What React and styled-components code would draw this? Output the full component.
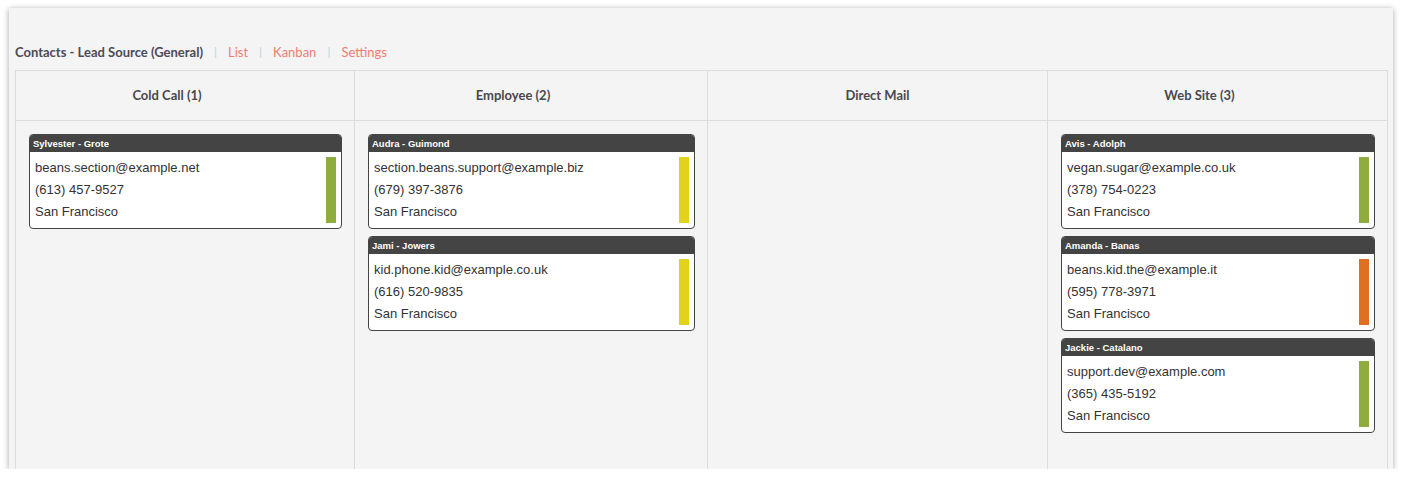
import React from 'react';
import styled, { createGlobalStyle } from 'styled-components';

const GlobalStyle = createGlobalStyle`
  html, body {
    margin: 0;
    padding: 0;
    background: #ffffff;
  }
  body {
    font-family: Lato, "Liberation Sans", sans-serif;
  }
`;

const columns = [
  {
    title: 'Cold Call',
    count: 1,
    width: 339,
    cards: [
      { name: 'Sylvester - Grote', email: 'beans.section@example.net', phone: '(613) 457-9527', city: 'San Francisco', color: '#8fac3e' },
    ],
  },
  {
    title: 'Employee',
    count: 2,
    width: 353,
    cards: [
      { name: 'Audra - Guimond', email: 'section.beans.support@example.biz', phone: '(679) 397-3876', city: 'San Francisco', color: '#e3d21b' },
      { name: 'Jami - Jowers', email: 'kid.phone.kid@example.co.uk', phone: '(616) 520-9835', city: 'San Francisco', color: '#e3d21b' },
    ],
  },
  {
    title: 'Direct Mail',
    count: 0,
    width: 340,
    cards: [],
  },
  {
    title: 'Web Site',
    count: 3,
    width: 339,
    cards: [
      { name: 'Avis - Adolph', email: 'vegan.sugar@example.co.uk', phone: '(378) 754-0223', city: 'San Francisco', color: '#8fac3e' },
      { name: 'Amanda - Banas', email: 'beans.kid.the@example.it', phone: '(595) 778-3971', city: 'San Francisco', color: '#de701f' },
      { name: 'Jackie - Catalano', email: 'support.dev@example.com', phone: '(365) 435-5192', city: 'San Francisco', color: '#8fac3e' },
    ],
  },
];

function App() {
  return (
    <>
      <GlobalStyle />
      <Panel>
        <Toolbar>
          <Title>Contacts - Lead Source (General)</Title>
          <Sep>|</Sep>
          <NavLink href="#">List</NavLink>
          <Sep>|</Sep>
          <NavLink href="#">Kanban</NavLink>
          <Sep>|</Sep>
          <NavLink href="#">Settings</NavLink>
        </Toolbar>
        <Board $cols={columns.map(c => `${c.width}px`).join(' ')}>
          {columns.map(col => (
            <HeadCell key={col.title}>
              <HeadLabel $counted={col.count > 0}>
                {col.count > 0 ? `${col.title} (${col.count})` : col.title}
              </HeadLabel>
            </HeadCell>
          ))}
          {columns.map(col => (
            <Lane key={col.title}>
              {col.cards.map(card => (
                <Card key={card.name}>
                  <CardHead>{card.name}</CardHead>
                  <CardBody>
                    <Lines>
                      <Line>{card.email}</Line>
                      <Line>{card.phone}</Line>
                      <Line>{card.city}</Line>
                    </Lines>
                    <Bar $color={card.color} />
                  </CardBody>
                </Card>
              ))}
            </Lane>
          ))}
        </Board>
      </Panel>
    </>
  );
}

const Panel = styled.div`
  margin: 8px 9px 0 9px;
  height: 461px;
  box-sizing: border-box;
  padding: 36px 5px 0 6px;
  background: #f4f4f4;
  box-shadow: 0 1px 6px rgba(0, 0, 0, 0.35);
  overflow: hidden;
`;

const Toolbar = styled.div`
  display: flex;
  align-items: center;
  height: 16px;
  margin-bottom: 10px;
  font-size: 13px;
  line-height: 16px;
`;

const Title = styled.span`
  font-weight: 700;
  color: #4b4b57;
`;

const Sep = styled.span`
  color: #bcd3d3;
  margin: 0 11px;
  font-size: 12px;
`;

const NavLink = styled.a`
  color: #f27c74;
  text-decoration: none;
`;

const Board = styled.div`
  display: grid;
  grid-template-columns: ${p => p.$cols};
  grid-template-rows: 50px 1fr;
  border: 1px solid #dcdcdc;
  border-bottom: none;
  height: 420px;
`;

const HeadCell = styled.div`
  display: flex;
  align-items: center;
  justify-content: center;
  padding-bottom: 2px;
  border-bottom: 1px solid #dcdcdc;
  border-right: 1px solid #dcdcdc;
  &:nth-child(4) {
    border-right: none;
  }
`;

const HeadLabel = styled.span`
  font-size: 13px;
  font-weight: 700;
  color: #484850;
  padding-right: ${p => (p.$counted ? '36px' : '0')};
`;

const Lane = styled.div`
  display: flex;
  flex-direction: column;
  gap: 7px;
  padding: 13px 12px 0 13px;
  border-right: 1px solid #dcdcdc;
  &:last-child {
    border-right: none;
  }
`;

const Card = styled.div`
  border: 1px solid #444;
  border-radius: 4px;
  background: #fff;
  overflow: hidden;
  font-family: "Liberation Sans", Arial, sans-serif;
`;

const CardHead = styled.div`
  height: 17px;
  line-height: 17px;
  padding-left: 3px;
  background: #444;
  color: #fff;
  font-size: 9.5px;
  font-weight: 700;
`;

const CardBody = styled.div`
  display: flex;
  padding: 5px 5px 5px 5px;
`;

const Lines = styled.div`
  flex: 1;
`;

const Line = styled.div`
  font-size: 13px;
  line-height: 22px;
  color: #333;
`;

const Bar = styled.div`
  width: 10px;
  height: 66px;
  background: ${p => p.$color};
`;

export default App;
